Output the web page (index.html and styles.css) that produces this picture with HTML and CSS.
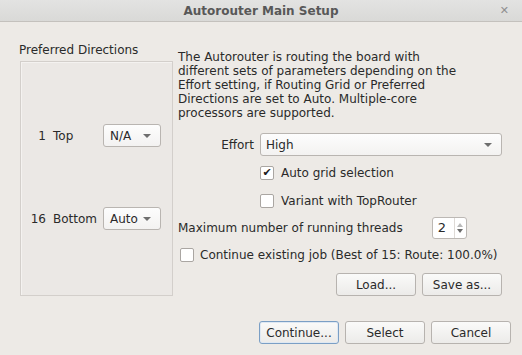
FILE: index.html
```html
<!DOCTYPE html>
<html lang="en">
<head>
    <meta charset="UTF-8">
    <title>Autorouter Main Setup</title>
    <link rel="stylesheet" href="styles.css">
</head>
<body>
    <div class="window">
        <div class="titlebar">
            <span class="title">Autorouter Main Setup</span>
            <span class="close">&#10005;</span>
        </div>
        <div class="main">
            <div class="directions">
                <div class="group-label">Preferred Directions</div>
                <div class="group-frame">
                    <div class="layer-row">
                        <span class="layer-num">1</span>
                        <span class="layer-name">Top</span>
                        <div class="combo small">N/A<span class="arrow"></span></div>
                    </div>
                    <div class="layer-row">
                        <span class="layer-num">16</span>
                        <span class="layer-name">Bottom</span>
                        <div class="combo small">Auto<span class="arrow"></span></div>
                    </div>
                </div>
            </div>
            <div class="settings">
                <p class="info">The Autorouter is routing the board with different sets of parameters depending on the Effort setting, if Routing Grid or Preferred Directions are set to Auto. Multiple-core processors are supported.</p>
                <div class="effort-row">
                    <span class="effort-label">Effort</span>
                    <div class="combo wide">High<span class="arrow"></span></div>
                </div>
                <div class="check-row indent first">
                    <span class="checkbox">&#10004;</span>
                    <span>Auto grid selection</span>
                </div>
                <div class="check-row indent second">
                    <span class="checkbox"></span>
                    <span>Variant with TopRouter</span>
                </div>
                <div class="threads-row">
                    <span>Maximum number of running threads</span>
                    <div class="spinbox">
                        <span class="spin-value">2</span>
                        <span class="spin-buttons">
                            <span class="spin-up"></span>
                            <span class="spin-down"></span>
                        </span>
                    </div>
                </div>
                <div class="check-row continue">
                    <span class="checkbox"></span>
                    <span>Continue existing job (Best of 15: Route: 100.0%)</span>
                </div>
                <div class="file-buttons">
                    <button class="btn">Load...</button>
                    <button class="btn">Save as...</button>
                </div>
            </div>
        </div>
        <div class="footer">
            <button class="btn default">Continue...</button>
            <button class="btn">Select</button>
            <button class="btn">Cancel</button>
        </div>
    </div>
</body>
</html>
```

FILE: styles.css
```css
body {
    margin: 0;
    background-color: #edeae6;
    font-family: "DejaVu Sans", sans-serif;
    font-size: 12px;
    line-height: 14px;
    color: #2a2a2a;
}
.window {
    width: 522px;
    height: 355px;
    overflow: hidden;
}
.titlebar {
    position: relative;
    height: 21px;
    display: flex;
    justify-content: center;
    align-items: center;
    background: linear-gradient(#e3e3e2, #d9d9d7);
    border-bottom: 1px solid #c4c1bd;
}
.title {
    font-weight: bold;
    color: #585858;
}
.close {
    position: absolute;
    right: 13px;
    top: 4px;
    font-size: 11px;
    font-weight: bold;
    color: #8f8f8f;
}
.main {
    display: flex;
    padding-top: 21px;
}
.directions {
    margin-left: 19px;
    width: 155px;
}
.group-frame {
    margin-top: 4px;
    margin-left: 1px;
    width: 151px;
    height: 171px;
    border: 1px solid #d3cfcb;
    box-shadow: inset 1px 1px 0 #f4f2f0;
    background-color: #ebe8e5;
    display: flex;
    flex-direction: column;
    gap: 60px;
    padding-top: 62px;
}
.layer-row {
    display: flex;
    align-items: center;
    height: 23px;
}
.layer-num {
    width: 25px;
    text-align: right;
}
.layer-name {
    width: 50px;
    margin-left: 7px;
}
.combo {
    position: relative;
    height: 21px;
    display: flex;
    align-items: center;
    padding-left: 6px;
    border: 1px solid #b9b5b1;
    border-radius: 3px;
    background: linear-gradient(#fdfdfd, #f3f2f1);
}
.combo.small {
    width: 50px;
}
.combo.wide {
    flex: 1;
    padding-left: 5px;
}
.arrow {
    position: absolute;
    right: 9px;
    top: 9px;
    width: 0;
    height: 0;
    border-left: 4px solid transparent;
    border-right: 4px solid transparent;
    border-top: 4px solid #6e6e6e;
}
.settings {
    margin-left: 4px;
    width: 324px;
    padding-top: 7px;
}
.info {
    margin: 0;
    width: 292px;
}
.effort-row {
    display: flex;
    align-items: center;
    margin-top: 13px;
}
.effort-label {
    width: 76px;
    text-align: right;
    margin-right: 6px;
}
.check-row {
    display: flex;
    align-items: center;
    gap: 7px;
}
.check-row.indent {
    padding-left: 82px;
}
.check-row.first {
    margin-top: 10px;
}
.check-row.second {
    margin-top: 14px;
}
.check-row.continue {
    margin-top: 9px;
    padding-left: 2px;
    gap: 6px;
}
.checkbox {
    width: 12px;
    height: 12px;
    border: 1px solid #aaa6a2;
    border-radius: 2px;
    background-color: #ffffff;
    display: flex;
    justify-content: center;
    align-items: center;
    font-size: 11px;
    color: #1e1e1e;
}
.threads-row {
    display: flex;
    align-items: center;
    margin-top: 9px;
}
.spinbox {
    display: flex;
    margin-left: 29px;
    width: 33px;
    height: 20px;
    border: 1px solid #bcb8b4;
    border-radius: 3px;
    background-color: #ffffff;
}
.spin-value {
    flex: 1;
    padding-left: 5px;
    display: flex;
    align-items: center;
    font-size: 13px;
}
.spin-buttons {
    width: 11px;
    border-left: 1px solid #dedad6;
    display: flex;
    flex-direction: column;
    justify-content: center;
    align-items: center;
    gap: 2px;
}
.spin-up {
    border-left: 3px solid transparent;
    border-right: 3px solid transparent;
    border-bottom: 4px solid #b9b9b9;
}
.spin-down {
    border-left: 3px solid transparent;
    border-right: 3px solid transparent;
    border-top: 4px solid #6a6a6a;
}
.file-buttons {
    display: flex;
    justify-content: flex-end;
    gap: 6px;
    margin-top: 11px;
}
.btn {
    width: 80px;
    height: 23px;
    padding: 0;
    font-family: "DejaVu Sans", sans-serif;
    font-size: 12px;
    color: #2a2a2a;
    border: 1px solid #b7b3af;
    border-radius: 3px;
    background: linear-gradient(#fafaf9, #ecebe9);
}
.btn.default {
    border-color: #7b9fc5;
    box-shadow: inset 0 0 0 1px #dfe8f2;
}
.footer {
    display: flex;
    justify-content: flex-end;
    gap: 6px;
    margin-top: 25px;
    padding-right: 11px;
}
```
